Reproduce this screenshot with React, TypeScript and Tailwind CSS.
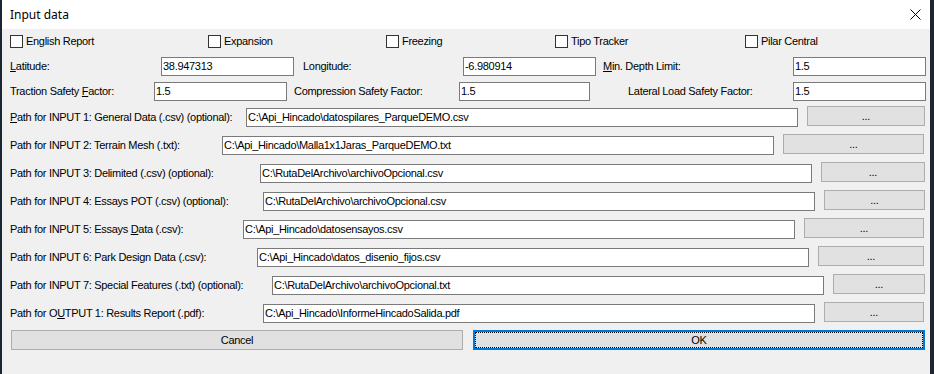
import React from 'react';

// ─────────────────────────────────────────────
// Data
// ─────────────────────────────────────────────
type PathRow = {
  label: React.ReactNode;
  value: string;
  labelW: number; // distance from text start to textbox
  end: number;    // right edge of the browse button (local x)
};

const PATH_ROWS: PathRow[] = [
  { label: <><u>P</u>ath for INPUT 1: General Data (.csv) (optional):</>, value: 'C:\\Api_Hincado\\datospilares_ParqueDEMO.csv', labelW: 236, end: 923 },
  { label: 'Path for INPUT 2: Terrain Mesh (.txt):', value: 'C:\\Api_Hincado\\Malla1x1Jaras_ParqueDEMO.txt', labelW: 212, end: 922 },
  { label: 'Path for INPUT 3: Delimited (.csv) (optional):', value: 'C:\\RutaDelArchivo\\archivoOpcional.csv', labelW: 250, end: 923 },
  { label: 'Path for INPUT 4: Essays POT (.csv) (optional):', value: 'C:\\RutaDelArchivo\\archivoOpcional.csv', labelW: 253, end: 923 },
  { label: <>Path for INPUT 5: Essays <u>D</u>ata (.csv):</>, value: 'C:\\Api_Hincado\\datosensayos.csv', labelW: 233, end: 922 },
  { label: 'Path for INPUT 6: Park Design Data (.csv):', value: 'C:\\Api_Hincado\\datos_disenio_fijos.csv', labelW: 247, end: 922 },
  { label: 'Path for INPUT 7: Special Features (.txt) (optional):', value: 'C:\\RutaDelArchivo\\archivoOpcional.txt', labelW: 262, end: 923 },
  { label: <>Path for O<u>U</u>TPUT 1: Results Report (.pdf):</>, value: 'C:\\Api_Hincado\\InformeHincadoSalida.pdf', labelW: 253, end: 922 },
];

const CHECKS = [
  { text: 'English Report', w: 198 },
  { text: 'Expansion', w: 178 },
  { text: 'Freezing', w: 169 },
  { text: 'Tipo Tracker', w: 190 },
  { text: 'Pilar Central', w: 120 },
];

// ─────────────────────────────────────────────
// Small win-forms bits
// ─────────────────────────────────────────────
const TextBox = ({ value, w }: { value: string; w: number }) => (
  <div
    className="h-[19px] shrink-0 bg-white border border-[#7a7a7a] pl-[1px] flex items-center whitespace-nowrap overflow-hidden"
    style={{ width: w }}
  >
    <span>{value}</span>
  </div>
);

const Browse = ({ w }: { w: number }) => (
  <div
    className="h-[20px] shrink-0 bg-[#e1e1e1] border border-[#adadad] flex items-center justify-center"
    style={{ width: w }}
  >
    ...
  </div>
);

const Label = ({ children, w, pl = 0 }: { children: React.ReactNode; w: number; pl?: number }) => (
  <div className="h-[19px] shrink-0 flex items-center whitespace-nowrap" style={{ width: w, paddingLeft: pl }}>
    <span>{children}</span>
  </div>
);

// ─────────────────────────────────────────────
// App
// ─────────────────────────────────────────────
export default function App() {
  return (
    <div className="w-[934px] h-[374px] flex bg-[#1c2630] overflow-hidden text-[11px] tracking-[-0.3px] text-black leading-none font-['Liberation_Sans',Arial,sans-serif]">
      <div className="w-[2px] shrink-0" />

      <div className="w-[928px] shrink-0 flex flex-col bg-[#f0f0f0]">
        {/* ── Title bar ── */}
        <div className="h-[29px] bg-white flex items-center justify-between pl-[8px] pr-[8px]">
          <span className="text-[12px] tracking-normal font-['Noto_Sans',sans-serif]">Input data</span>
          <svg width="11" height="11" viewBox="0 0 11 11" className="mr-[1px]">
            <path d="M0.5 0.5 L10.5 10.5 M10.5 0.5 L0.5 10.5" stroke="#000" strokeWidth="1" />
          </svg>
        </div>

        {/* ── Checkboxes ── */}
        <div className="mt-[6px] h-[13px] flex pl-[8px]">
          {CHECKS.map((c) => (
            <div key={c.text} className="flex items-center gap-[3px] shrink-0" style={{ width: c.w }}>
              <div className="w-[13px] h-[13px] border border-[#333] bg-white shrink-0" />
              <span className="whitespace-nowrap">{c.text}</span>
            </div>
          ))}
        </div>

        {/* ── Coordinates ── */}
        <div className="mt-[9px] flex pl-[8px]">
          <Label w={151}><u>L</u>atitude:</Label>
          <TextBox value="38.947313" w={133} />
          <Label w={169} pl={9}>Longitude:</Label>
          <TextBox value="-6.980914" w={133} />
          <Label w={197} pl={7}><u>M</u>in. Depth Limit:</Label>
          <TextBox value="1.5" w={133} />
        </div>

        {/* ── Safety factors ── */}
        <div className="mt-[6px] flex pl-[8px]">
          <Label w={144}>Traction Safety <u>F</u>actor:</Label>
          <TextBox value="1.5" w={133} />
          <Label w={172} pl={7}>Compression Safety Factor:</Label>
          <TextBox value="1.5" w={131} />
          <Label w={203} pl={38}>Lateral Load Safety Factor:</Label>
          <TextBox value="1.5" w={133} />
        </div>

        {/* ── Paths ── */}
        <div className="mt-[5px] flex flex-col pl-[8px]">
          {PATH_ROWS.map((r, i) => (
            <div key={i} className="h-[28px] flex items-start">
              <div className="mt-[2px] flex">
                <Label w={r.labelW}>{r.label}</Label>
                <TextBox value={r.value} w={552} />
              </div>
              <div className="ml-[9px]">
                <Browse w={r.end - 8 - r.labelW - 552 - 9} />
              </div>
            </div>
          ))}
        </div>

        {/* ── Actions ── */}
        <div className="flex pl-[9px] gap-[10px]">
          <div className="w-[452px] h-[20px] bg-[#e1e1e1] border border-[#adadad] flex items-center justify-center">
            Cancel
          </div>
          <div className="w-[452px] h-[20px] bg-[#e1e1e1] border-2 border-[#0078d7] flex">
            <div className="flex-1 border border-dotted border-black flex items-center justify-center">
              OK
            </div>
          </div>
        </div>
      </div>

      <div className="w-[4px] shrink-0" />
    </div>
  );
}
